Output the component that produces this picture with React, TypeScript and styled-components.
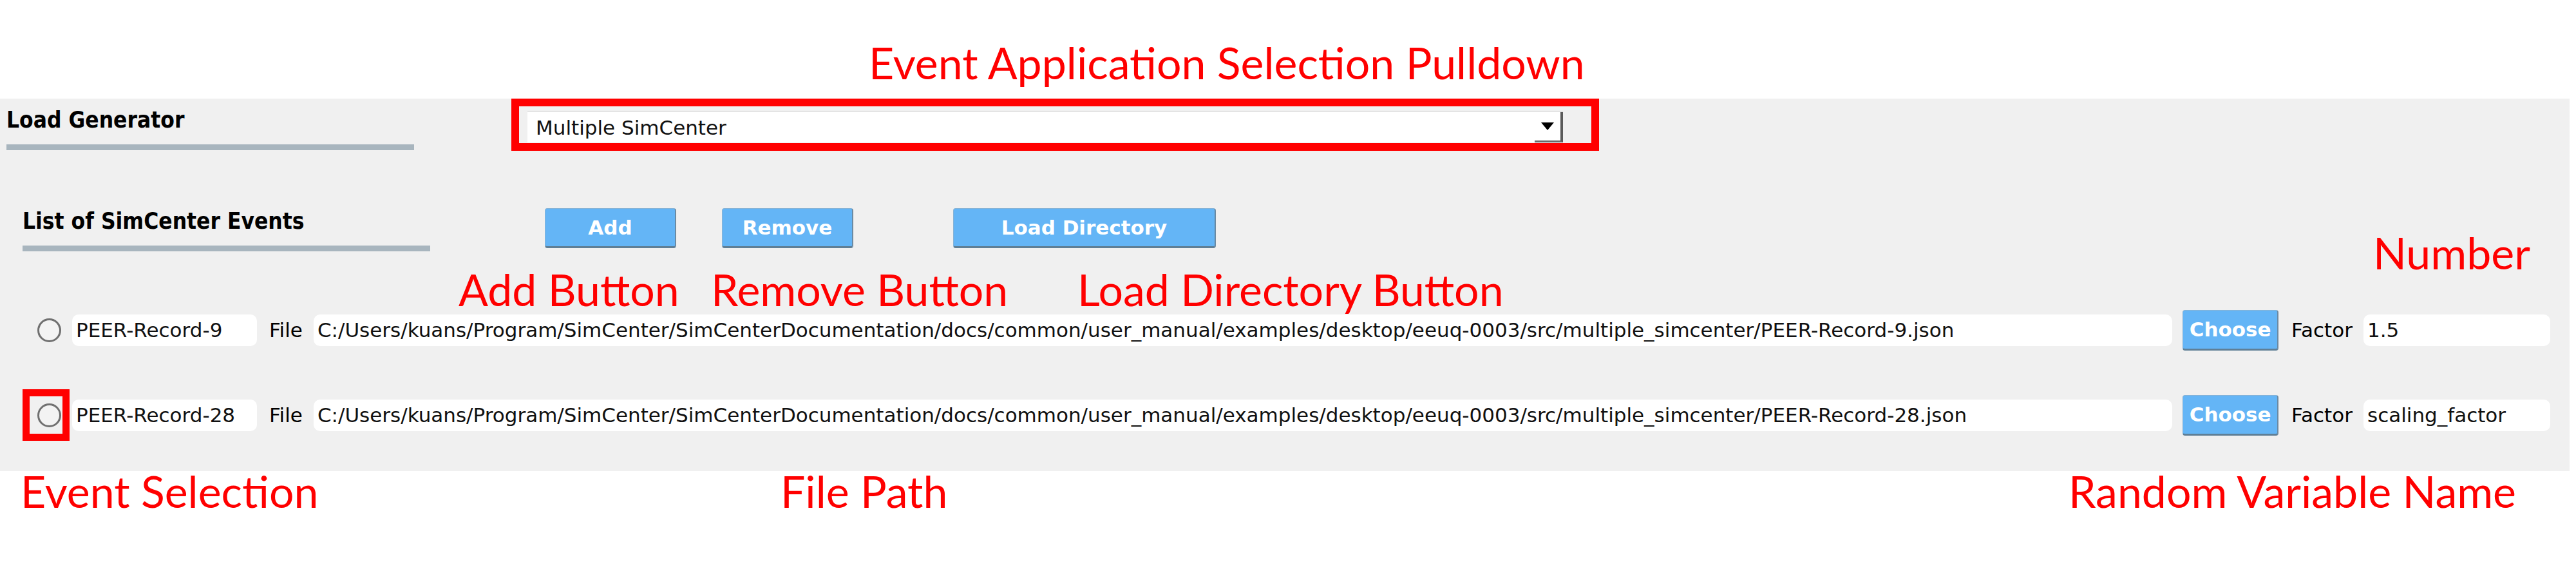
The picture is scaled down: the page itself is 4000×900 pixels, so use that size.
import styled, { createGlobalStyle } from "styled-components";

// Qt-ish widget font (Tahoma in the original) and the Calibri-like note font
const UI_FONT = `"DejaVu Sans", "Liberation Sans", sans-serif`;
const HEAD_FONT = `"DejaVu Sans Condensed", "DejaVu Sans", sans-serif`;
const NOTE_FONT = `Lato, "Open Sans", sans-serif`;

const GlobalStyle = createGlobalStyle`
  html, body {
    margin: 0;
    padding: 0;
    background: #ffffff;
  }
  body {
    font-family: ${UI_FONT};
  }
`;

const Page = styled.div`
  width: 4000px;
  height: 900px;
  display: flex;
  flex-direction: column;
  background: #ffffff;
  overflow: hidden;
`;

const TopBand = styled.div`
  height: 153px;
  box-sizing: border-box;
  padding: 74px 0 0 1349px;
`;

const Callout = styled.div<{ $left?: number; $top?: number }>`
  margin-left: ${(p) => p.$left ?? 0}px;
  margin-top: ${(p) => p.$top ?? 0}px;
  font-family: ${NOTE_FONT};
  font-size: 68px;
  line-height: 46px;
  color: #ff0000;
  white-space: nowrap;
`;

const Panel = styled.div`
  width: 3990px;
  height: 578px;
  background: #f0f0f0;
  display: flex;
  flex-direction: column;
  font-family: ${UI_FONT};
`;

const LoadGenRow = styled.div`
  display: flex;
  align-items: flex-start;
`;

const SectionHeading = styled.div<{ $indent: number; $top: number }>`
  margin-left: ${(p) => p.$indent}px;
  margin-top: ${(p) => p.$top}px;
  width: 633px;
  flex-shrink: 0;
`;

const HeadingText = styled.div`
  font-family: ${HEAD_FONT};
  font-size: 35px;
  line-height: 36px;
  font-weight: 700;
  color: #000000;
  white-space: nowrap;
`;

const Rule = styled.div`
  height: 9px;
  margin-top: 20px;
  background: #a8b5be;
`;

const RedFrame = styled.div`
  margin-left: 151px;
  width: 1689px;
  height: 81px;
  box-sizing: border-box;
  border: 12px solid #ff0000;
  padding: 7px 44px 1px 13px;
`;

const Combo = styled.div`
  height: 49px;
  box-sizing: border-box;
  background: #ffffff;
  border-top: 2px solid #e4e4e4;
  display: flex;
  align-items: center;
  padding-left: 13px;
  font-size: 31px;
  color: #111111;
`;

const ComboText = styled.span`
  flex: 1;
`;

const DropButton = styled.span`
  width: 44px;
  height: 100%;
  box-sizing: border-box;
  border-right: 4px solid #5a5a5a;
  border-bottom: 3px solid #6a6a6a;
  display: flex;
  align-items: center;
  justify-content: center;
`;

const Arrow = styled.span`
  width: 0;
  height: 0;
  border-left: 10px solid transparent;
  border-right: 10px solid transparent;
  border-top: 12px solid #000000;
`;

const EventsHeader = styled.div`
  display: flex;
  align-items: flex-start;
  margin-top: 89px;
`;

const BlueButton = styled.button<{ $width: number; $left: number; $height?: number }>`
  margin-left: ${(p) => p.$left}px;
  width: ${(p) => p.$width}px;
  height: ${(p) => p.$height ?? 62}px;
  flex-shrink: 0;
  box-sizing: border-box;
  padding: 0;
  background: #64b5f6;
  border: 1px solid #86b3d6;
  border-right: 2px solid #6a8aa3;
  border-bottom: 3px solid #5f7f96;
  border-radius: 4px;
  color: #ffffff;
  font-family: ${UI_FONT};
  font-size: 31px;
  font-weight: 700;
  white-space: nowrap;
`;

const CalloutRow = styled.div<{ $top: number; $columns: string; $indent: number }>`
  display: grid;
  grid-template-columns: ${(p) => p.$columns};
  padding-left: ${(p) => p.$indent}px;
  margin-top: ${(p) => p.$top}px;
`;

const EventRow = styled.div<{ $top: number }>`
  display: flex;
  align-items: center;
  height: 80px;
  margin-top: ${(p) => p.$top}px;
  padding-right: 30px;
`;

const RadioCell = styled.div<{ $marked: boolean }>`
  margin-left: 35px;
  width: 73px;
  height: 80px;
  flex-shrink: 0;
  box-sizing: border-box;
  border: 11px solid ${(p) => (p.$marked ? "#ff0000" : "transparent")};
  display: flex;
  align-items: center;
  padding-left: 12px;
`;

const Radio = styled.span`
  width: 37px;
  height: 37px;
  box-sizing: border-box;
  border-radius: 50%;
  border: 3px solid #707070;
  background: #f3f3f3;
`;

const TextField = styled.div<{ $left: number; $width?: number }>`
  margin-left: ${(p) => p.$left}px;
  ${(p) => (p.$width ? `width: ${p.$width}px; flex-shrink: 0;` : "flex: 1; min-width: 0;")}
  height: 49px;
  box-sizing: border-box;
  background: #ffffff;
  border-radius: 10px;
  padding: 0 6px;
  display: flex;
  align-items: center;
  font-size: 31px;
  color: #111111;
  white-space: nowrap;
  overflow: hidden;
`;

const FieldLabel = styled.span<{ $left: number }>`
  margin-left: ${(p) => p.$left}px;
  font-size: 31px;
  color: #000000;
  white-space: nowrap;
`;

const BottomBand = styled.div`
  display: grid;
  grid-template-columns: 1180px 2000px auto;
  padding-left: 32px;
  margin-top: 8px;
`;

interface IEvent {
  name: string;
  path: string;
  factor: string;
}

const BASE =
  "C:/Users/kuans/Program/SimCenter/SimCenterDocumentation/docs/common/user_manual/examples/desktop/eeuq-0003/src/multiple_simcenter/";

const events: IEvent[] = [
  { name: "PEER-Record-9", path: BASE + "PEER-Record-9.json", factor: "1.5" },
  { name: "PEER-Record-28", path: BASE + "PEER-Record-28.json", factor: "scaling_factor" },
];

const App = () => {
  return (
    <>
      <GlobalStyle />
      <Page>
        <TopBand>
          <Callout>Event Application Selection Pulldown</Callout>
        </TopBand>
        <Panel>
          <LoadGenRow>
            <SectionHeading $indent={10} $top={15}>
              <HeadingText>Load Generator</HeadingText>
              <Rule />
            </SectionHeading>
            <RedFrame>
              <Combo>
                <ComboText>Multiple SimCenter</ComboText>
                <DropButton>
                  <Arrow />
                </DropButton>
              </Combo>
            </RedFrame>
          </LoadGenRow>

          <EventsHeader>
            <SectionHeading $indent={35} $top={2}>
              <HeadingText>List of SimCenter Events</HeadingText>
              <Rule />
            </SectionHeading>
            <BlueButton $left={178} $width={204}>Add</BlueButton>
            <BlueButton $left={71} $width={204}>Remove</BlueButton>
            <BlueButton $left={155} $width={408}>Load Directory</BlueButton>
            <Callout $left={1797} $top={46}>Number</Callout>
          </EventsHeader>

          <CalloutRow $top={11} $indent={712} $columns="392px 569px auto">
            <Callout>Add Button</Callout>
            <Callout>Remove Button</Callout>
            <Callout>Load Directory Button</Callout>
          </CalloutRow>

          {events.map((ev, i) => (
            <EventRow key={ev.name} $top={i === 0 ? 0 : 52}>
              <RadioCell $marked={i === 1}>
                <Radio />
              </RadioCell>
              <TextField $left={4} $width={287}>{ev.name}</TextField>
              <FieldLabel $left={19}>File</FieldLabel>
              <TextField $left={17}>{ev.path}</TextField>
              <BlueButton $left={16} $width={149} $height={63}>Choose</BlueButton>
              <FieldLabel $left={20}>Factor</FieldLabel>
              <TextField $left={17} $width={290}>{ev.factor}</TextField>
            </EventRow>
          ))}
        </Panel>
        <BottomBand>
          <Callout>Event Selection</Callout>
          <Callout>File Path</Callout>
          <Callout>Random Variable Name</Callout>
        </BottomBand>
      </Page>
    </>
  );
};

export default App;
